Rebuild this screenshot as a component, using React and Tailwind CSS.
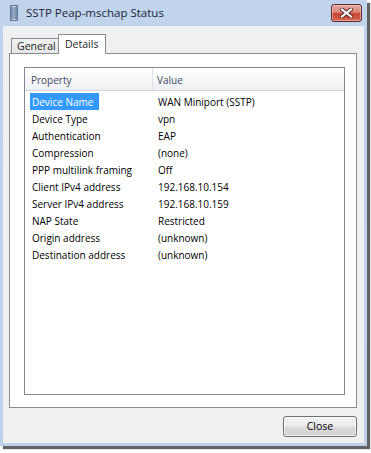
import React from "react";

const rows = [
  ["Device Name", "WAN Miniport (SSTP)"],
  ["Device Type", "vpn"],
  ["Authentication", "EAP"],
  ["Compression", "(none)"],
  ["PPP multilink framing", "Off"],
  ["Client IPv4 address", "192.168.10.154"],
  ["Server IPv4 address", "192.168.10.159"],
  ["NAP State", "Restricted"],
  ["Origin address", "(unknown)"],
  ["Destination address", "(unknown)"],
];

function TitleIcon() {
  return (
    <svg width="8" height="16" viewBox="0 0 8 16">
      <defs>
        <linearGradient id="ti" x1="0" x2="1" y1="0" y2="0">
          <stop offset="0" stopColor="#8aa4c4" />
          <stop offset="0.5" stopColor="#d8e4f2" />
          <stop offset="1" stopColor="#7d97b8" />
        </linearGradient>
      </defs>
      <rect x="0.5" y="0.5" width="7" height="15" fill="url(#ti)" stroke="#5f7896" strokeWidth="1" />
      {[3, 5, 7, 9, 11, 13].map((y) => (
        <line key={y} x1="1" x2="7" y1={y} y2={y} stroke="#55708f" strokeWidth="1" />
      ))}
    </svg>
  );
}

function CloseGlyph() {
  return (
    <svg width="13" height="10" viewBox="0 0 13 10">
      <path
        d="M2 1.5 L11 8.5 M11 1.5 L2 8.5"
        stroke="#5a2020"
        strokeWidth="4"
        strokeLinecap="square"
      />
      <path
        d="M2 1.5 L11 8.5 M11 1.5 L2 8.5"
        stroke="#ffffff"
        strokeWidth="2.2"
        strokeLinecap="square"
      />
    </svg>
  );
}

export default function App() {
  return (
    <div
      className="w-[371px] h-[453px] bg-white"
      style={{ fontFamily: '"Open Sans", "Noto Sans", sans-serif' }}
    >
      <div className="w-[367px] h-[446px] flex flex-col bg-[linear-gradient(180deg,#c0d5ec_0%,#bbd1ea_100%)] shadow-[3px_3px_1px_rgba(70,70,70,0.85)]">
        {/* Title bar */}
        <div className="h-[26px] flex items-center pl-[10px] pr-[5px]">
          <TitleIcon />
          <span className="ml-[8px] text-[11.5px] text-[#1c2233] leading-none">
            SSTP Peap-mschap Status
          </span>
          <div className="ml-auto w-[31px] h-[18px] rounded-[3px] border border-[#5b2a2f] bg-[linear-gradient(180deg,#e8aaa0_0%,#d98577_45%,#c5432f_55%,#d66a55_100%)] flex items-center justify-center shadow-[inset_0_0_0_1px_rgba(255,220,210,0.5)]">
            <CloseGlyph />
          </div>
        </div>

        {/* Client area */}
        <div className="mx-[3px] h-[417px] bg-[#f0f0f0] flex flex-col pl-[6px] pr-[7px] pt-[7px]">
          {/* Tabs */}
          <div className="h-[20px] flex items-end pl-[2px]">
            <div className="h-[15px] w-[48px] border border-b-0 border-[#898c95] bg-[linear-gradient(180deg,#f2f2f2_0%,#e6e6e6_100%)] text-[10.5px] text-[#1e1e1e] leading-none flex items-center pl-[5px] mr-[-1px]">
              General
            </div>
            <div className="relative z-10 h-[20px] w-[48px] border border-b-0 border-[#898c95] bg-white text-[10.5px] text-[#1e1e1e] leading-none flex items-start pt-[4px] pl-[6px] mb-[-1px]">
              Details
            </div>
          </div>

          {/* Panel */}
          <div className="h-[355px] w-[348px] border border-[#898c95] bg-white pt-[13px] pl-[14px] pr-[11px]">
            <div className="h-[328px] border border-[#828790] bg-white flex flex-col">
              {/* header */}
              <div className="h-[23px] flex bg-[linear-gradient(180deg,#ffffff_0%,#f6f7f9_55%,#eef0f3_100%)] border-b border-[#d5d5d5] text-[10px] text-[#3c4a63] leading-none">
                <div className="w-[127px] flex items-center pl-[6px] pt-[1px]">Property</div>
                <div className="flex-1 flex items-center pl-[4px] pt-[1px] border-l border-[#dfe2e7]">Value</div>
              </div>
              {/* rows */}
              <div className="pt-[2px] text-[10px] text-black leading-none">
                {rows.map(([k, v], i) => (
                  <div key={k} className="h-[17px] flex items-center">
                    <div className="w-[128px] pl-[5px] flex items-center h-full">
                      {i === 0 ? (
                        <span className="h-[17px] flex items-center bg-[#3399ff] text-white pl-[2px] pr-[6px]">
                          {k}
                        </span>
                      ) : (
                        <span className="pl-[2px]">{k}</span>
                      )}
                    </div>
                    <div className="pl-[5px]">{v}</div>
                  </div>
                ))}
              </div>
            </div>
          </div>

          {/* Button row */}
          <div className="mt-[8px] flex justify-end ml-[-1px]">
            <div className="w-[74px] h-[21px] rounded-[3px] border border-[#707070] bg-[linear-gradient(180deg,#f2f2f2_0%,#ebebeb_48%,#dddddd_52%,#cfcfcf_100%)] shadow-[inset_0_0_0_1px_rgba(255,255,255,0.7)] flex items-center justify-center text-[10.5px] text-black leading-none">
              Close
            </div>
          </div>
        </div>
      </div>
    </div>
  );
}
